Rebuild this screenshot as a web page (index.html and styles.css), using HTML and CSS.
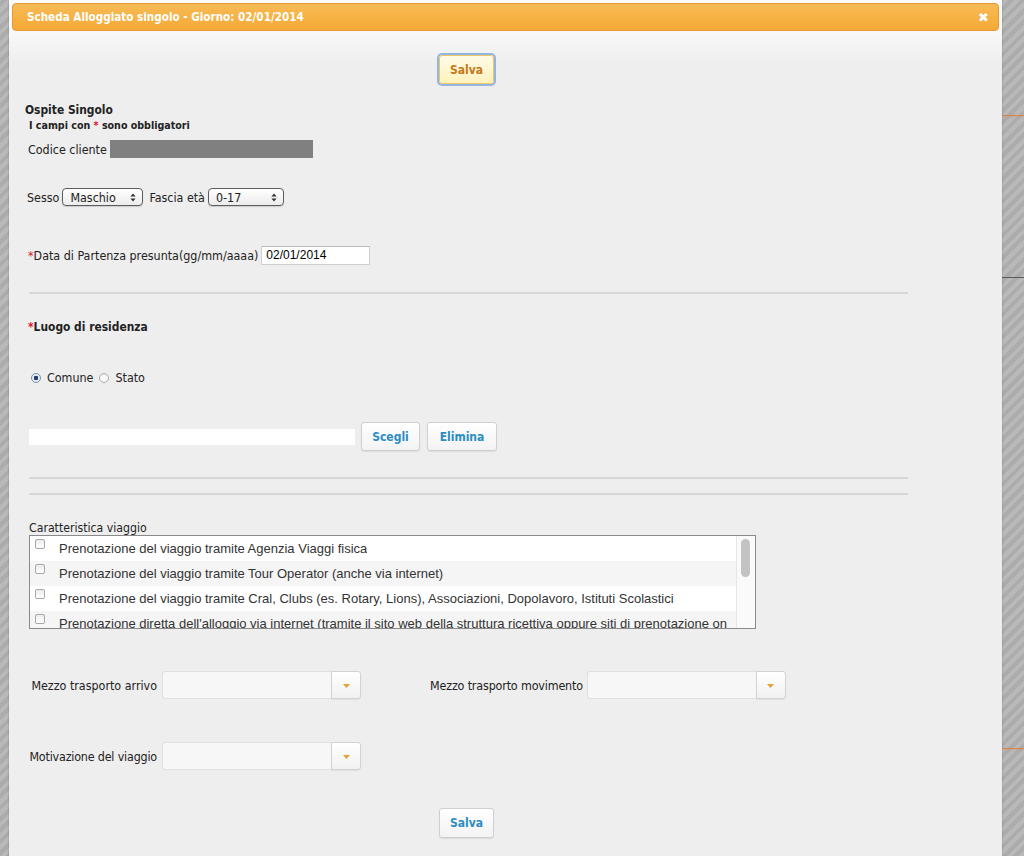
FILE: index.html
```html
<!DOCTYPE html>
<html lang="it">
<head>
<meta charset="utf-8">
<title>Scheda Alloggiato singolo</title>
<link rel="stylesheet" href="styles.css">
</head>
<body>
<div class="backdrop">
  <div class="bg-line orange first"></div>
  <div class="bg-line dark second"></div>
  <div class="bg-line orange third"></div>
</div>

<div class="dialog">
  <div class="titlebar">
    <span class="title">Scheda Alloggiato singolo - Giorno: 02/01/2014</span>
    <span class="close">&#x2716;</span>
  </div>

  <div class="content">
    <div class="center-row top-save"><button class="btn btn-focus">Salva</button></div>

    <div class="section-title">Ospite Singolo</div>
    <div class="note">I campi con <span class="req">*</span> sono obbligatori</div>

    <div class="line codice"><span>Codice cliente</span><span class="masked"></span></div>

    <div class="line sesso">
      <span>Sesso</span>
      <span class="mac-select w-sesso"><span class="val">Maschio</span><svg class="updown" width="6" height="9" viewBox="0 0 6 9"><path d="M3 0.5 L5.6 3.6 H0.4 Z M3 8.5 L5.6 5.4 H0.4 Z" fill="#333"/></svg></span>
      <span class="lbl-gap">Fascia età</span>
      <span class="mac-select w-eta"><span class="val">0-17</span><svg class="updown" width="6" height="9" viewBox="0 0 6 9"><path d="M3 0.5 L5.6 3.6 H0.4 Z M3 8.5 L5.6 5.4 H0.4 Z" fill="#333"/></svg></span>
    </div>

    <div class="line data">
      <span><span class="req">*</span>Data di Partenza presunta(gg/mm/aaaa)</span>
      <span class="date-input">02/01/2014</span>
    </div>

    <div class="rule rule-1"></div>

    <div class="section-title luogo"><span class="req">*</span>Luogo di residenza</div>

    <div class="line radios">
      <span class="radio checked"></span><span class="radio-lbl">Comune</span>
      <span class="radio"></span><span class="radio-lbl">Stato</span>
    </div>

    <div class="line scegli-row">
      <span class="plain-input"></span>
      <button class="btn btn-scegli">Scegli</button>
      <button class="btn btn-elimina">Elimina</button>
    </div>

    <div class="rule rule-2"></div>
    <div class="rule rule-3"></div>

    <div class="list-label">Caratteristica viaggio</div>
    <div class="list-box">
      <div class="list-rows">
        <div class="list-row"><span class="cb"></span><span class="txt">Prenotazione del viaggio tramite Agenzia Viaggi fisica</span></div>
        <div class="list-row alt"><span class="cb"></span><span class="txt">Prenotazione del viaggio tramite Tour Operator (anche via internet)</span></div>
        <div class="list-row"><span class="cb"></span><span class="txt">Prenotazione del viaggio tramite Cral, Clubs (es. Rotary, Lions), Associazioni, Dopolavoro, Istituti Scolastici</span></div>
        <div class="list-row alt"><span class="cb"></span><span class="txt">Prenotazione diretta dell'alloggio via internet (tramite il sito web della struttura ricettiva oppure siti di prenotazione on</span></div>
      </div>
      <div class="scrollbar"><div class="thumb"></div></div>
    </div>

    <div class="line combo-row row-a">
      <span class="combo-lbl">Mezzo trasporto arrivo</span>
      <span class="combo"><span class="combo-in"></span><span class="combo-btn"><svg width="7" height="4" viewBox="0 0 7 4"><path d="M0 0 H7 L3.5 4 Z" fill="#e9a133"/></svg></span></span>
      <span class="combo-lbl2">Mezzo trasporto movimento</span>
      <span class="combo"><span class="combo-in"></span><span class="combo-btn"><svg width="7" height="4" viewBox="0 0 7 4"><path d="M0 0 H7 L3.5 4 Z" fill="#e9a133"/></svg></span></span>
    </div>

    <div class="line combo-row row-b">
      <span class="combo-lbl tight">Motivazione del viaggio</span>
      <span class="combo"><span class="combo-in"></span><span class="combo-btn"><svg width="7" height="4" viewBox="0 0 7 4"><path d="M0 0 H7 L3.5 4 Z" fill="#e9a133"/></svg></span></span>
    </div>

    <div class="center-row bottom-save"><button class="btn">Salva</button></div>
  </div>
</div>
</body>
</html>
```

FILE: styles.css
```css
html, body {
  margin: 0;
  padding: 0;
  height: 856px;
  overflow: hidden;
}

body {
  background: repeating-linear-gradient(-45deg, #b9b9b9 0 4px, #acacac 4px 8px);
  font-family: "DejaVu Sans Condensed", "DejaVu Sans", sans-serif;
  font-size: 12.4px;
  color: #222;
}

/* page visible behind the modal */
.backdrop {
  padding-left: 1002px;
}
.bg-line {
  height: 1px;
}
.bg-line.orange { background: #d8844a; box-shadow: 0 1px 2px rgba(230, 140, 70, .35); }
.bg-line.dark { background: #5a5a5a; }
.bg-line.first { margin-top: 115px; }
.bg-line.second { margin-top: 161px; }
.bg-line.third { margin-top: 470px; }

/* modal window */
.dialog {
  position: absolute;
  left: 9px;
  top: 0;
  width: 993px;
  height: 900px;
  background: linear-gradient(#fbfbfb 0, #f8f8f8 32px, #eeeeee 64px, #eeeeee 100%);
  box-shadow: 0 0 2px rgba(0, 0, 0, .25);
}

.titlebar {
  margin: 3px 3px 0 3px;
  height: 26px;
  border: 1px solid #e39a34;
  border-radius: 4px;
  background: linear-gradient(#f7bb55, #f5a935);
  display: flex;
  align-items: center;
  justify-content: space-between;
  padding: 0 9px 0 14px;
  color: #fff;
  font-weight: bold;
  font-size: 11.6px;
}
.close {
  font-size: 13px;
  font-family: "DejaVu Sans", sans-serif;
}

.content {
  padding-left: 16px;
  width: 883px;
}

.center-row {
  display: flex;
  justify-content: center;
}

.btn {
  font-family: "DejaVu Sans Condensed", "DejaVu Sans", sans-serif;
  font-weight: bold;
  font-size: 12px;
  color: #2b8cc2;
  height: 30px;
  padding: 0;
  border: 1px solid #cfcfcf;
  border-radius: 3px;
  background: linear-gradient(#ffffff, #f3f3f3);
  box-shadow: 0 1px 1px rgba(0, 0, 0, .08);
}
.btn-focus {
  width: 55px;
  height: 29px;
  color: #c4781a;
  border-color: #eec66a;
  background: linear-gradient(#fffbe6, #fff2bd);
  box-shadow: 0 0 0 2px #93b5e2;
}
.top-save { margin-top: 24px; }
.bottom-save { margin-top: 38px; }
.bottom-save .btn { width: 55px; }

.section-title {
  font-weight: bold;
  font-size: 11.9px;
  line-height: 16px;
  margin-top: 18px;
}
.note {
  font-weight: bold;
  font-size: 10.6px;
  line-height: 14px;
  margin-top: 0;
  padding-left: 4px;
}
.req { color: #e0142a; }

.line {
  display: flex;
  align-items: center;
  white-space: nowrap;
}

.codice {
  margin-top: 8px;
  padding-left: 3px;
  height: 18px;
  gap: 3px;
}
.masked {
  width: 203px;
  height: 18px;
  background: #808080;
}

.sesso {
  margin-top: 30px;
  padding-left: 2px;
  height: 18px;
  gap: 3px;
}
.lbl-gap { margin-left: 3px; }
.mac-select {
  height: 16px;
  border: 1px solid #5d5d5d;
  border-radius: 4px;
  background: linear-gradient(#ffffff, #ececec);
  box-shadow: 0 1px 1px rgba(0, 0, 0, .15);
  display: flex;
  align-items: center;
  justify-content: space-between;
  padding: 0 6px 0 7px;
  box-sizing: content-box;
}
.w-sesso { width: 66px; }
.w-eta { width: 61px; }
.updown { display: block; }

.data {
  margin-top: 40px;
  padding-left: 3px;
  height: 19px;
  gap: 3px;
}
.date-input {
  width: 103px;
  height: 17px;
  line-height: 17px;
  padding-left: 4px;
  background: #fff;
  border: 1px solid #d0d0d0;
  border-top-color: #bdbdbd;
  font-family: "Liberation Sans", Arial, sans-serif;
  font-size: 12px;
  color: #000;
}

.rule {
  margin-left: 4px;
  height: 2px;
  background: #d7d7d7;
}
.rule-1 { margin-top: 27px; }
.rule-2 { margin-top: 26px; }
.rule-3 { margin-top: 14px; }

.luogo {
  margin-top: 25px;
  padding-left: 3px;
}

.radios {
  margin-top: 34px;
  padding-left: 6px;
  height: 16px;
}
.radio {
  width: 8px;
  height: 8px;
  border: 1px solid #a9a9a9;
  border-radius: 50%;
  background: linear-gradient(#f3f3f3, #ffffff);
  position: relative;
  margin-top: 1px;
}
.radio.checked {
  border-color: #7d8da3;
  background: radial-gradient(circle, #1f3f6f 0 2px, #dfe7f2 2.5px, #f7f9fc 100%);
}
.radio-lbl { margin: 0 6px 0 6px; }

.scegli-row {
  margin-top: 37px;
  padding-left: 4px;
  height: 29px;
}
.plain-input {
  width: 326px;
  height: 16px;
  background: #fff;
  margin-right: 6px;
}
.btn-scegli { width: 59px; height: 29px; }
.btn-elimina { width: 70px; height: 29px; margin-left: 7px; }

.list-label {
  margin-top: 26px;
  padding-left: 4px;
  line-height: 14px;
  font-size: 12.2px;
  color: #222;
}
.list-box {
  margin-left: 4px;
  width: 725px;
  height: 92px;
  border: 1px solid #8a8a8a;
  background: #fff;
  display: flex;
  overflow: hidden;
}
.list-rows {
  flex: 1;
  min-width: 0;
}
.list-row {
  height: 25px;
  display: flex;
  align-items: center;
  padding-left: 5px;
  font-family: "Liberation Sans", Arial, sans-serif;
  font-size: 13px;
  color: #333;
  white-space: nowrap;
  overflow: hidden;
}
.list-row.alt { background: #f5f5f5; }
.cb {
  flex: none;
  width: 8px;
  height: 8px;
  border: 1px solid #a8a8a8;
  border-radius: 2px;
  background: linear-gradient(#ececec, #fff);
  align-self: flex-start;
  margin-top: 3px;
  margin-right: 14px;
}
.txt { overflow: hidden; }
.scrollbar {
  width: 19px;
  flex: none;
  background: #fafafa;
  border-left: 1px solid #e6e6e6;
  padding: 3px 0 0 4px;
  box-sizing: border-box;
}
.thumb {
  width: 9px;
  height: 38px;
  border-radius: 5px;
  background: #c3c3c3;
}

.combo-row {
  height: 28px;
}
.row-a { margin-top: 42px; }
.row-b { margin-top: 43px; }
.combo-lbl {
  width: 132px;
  flex: none;
  text-align: right;
  margin-right: 5px;
}
.combo-lbl.tight { letter-spacing: -0.18px; }
.combo-lbl2 {
  margin-left: 69px;
  margin-right: 4px;
  letter-spacing: -0.15px;
}
.combo {
  display: flex;
  flex: none;
  width: 199px;
  height: 28px;
}
.combo-in {
  flex: 1;
  border: 1px solid #e0e0e0;
  border-right: none;
  border-radius: 3px 0 0 3px;
  background: #f7f7f7;
}
.combo-btn {
  width: 28px;
  border: 1px solid #d2d2d2;
  border-radius: 0 3px 3px 0;
  background: linear-gradient(#ffffff, #f1f1f1);
  display: flex;
  align-items: center;
  justify-content: center;
  box-shadow: 0 1px 1px rgba(0, 0, 0, .06);
}
.combo-btn svg { display: block; margin-top: 2px; }
```
